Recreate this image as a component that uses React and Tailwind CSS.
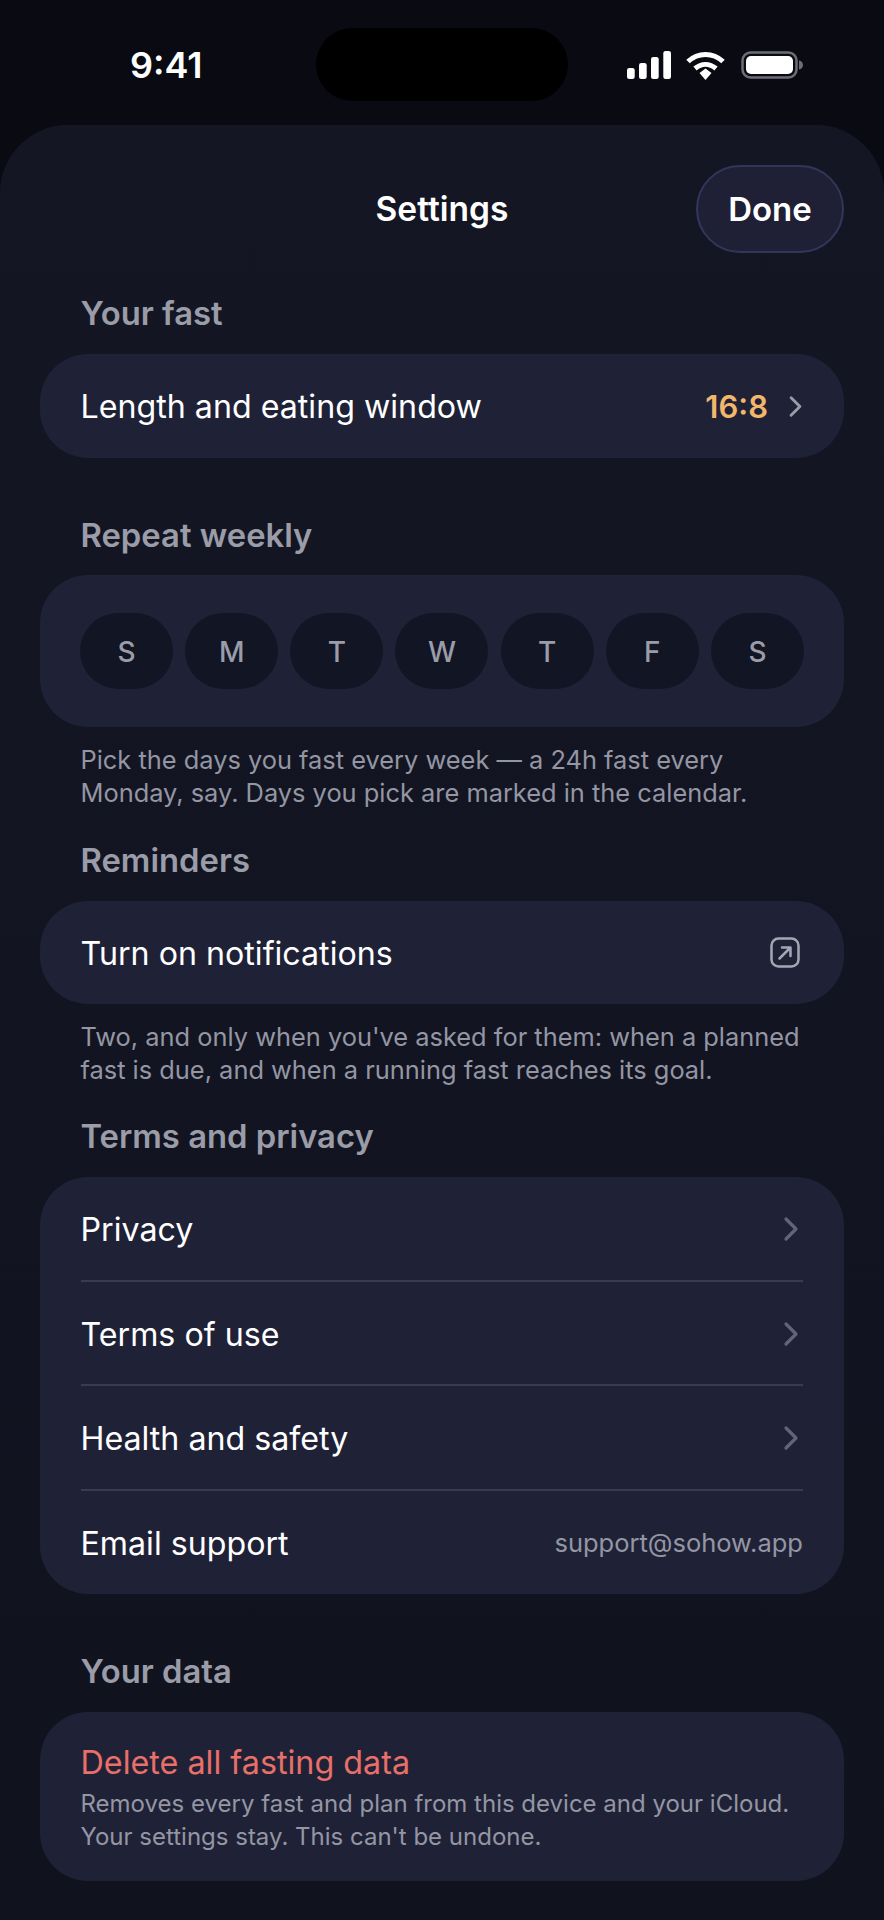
const DAYS = ["S", "M", "T", "W", "T", "F", "S"];
const LINKS = ["Privacy", "Terms of use", "Health and safety"];

const Chevron = ({ className }) => (
  <svg viewBox="0 0 16 26" fill="none" className={className}>
    <path d="M3 3l10 10-10 10" stroke="currentColor" strokeWidth="3.2" strokeLinecap="round" strokeLinejoin="round" />
  </svg>
);

const StatusBar = () => (
  <div className="relative h-[125px] flex justify-between pt-[44px] pl-[130px] pr-[81px] text-white">
    <div className="text-[36px] leading-[42px] font-semibold">9:41</div>
    <div className="absolute left-[316px] top-[28px] w-[252px] h-[73px] rounded-[37px] bg-black" />
    <div className="flex items-center h-[42px]">
      <svg width="44" height="28" viewBox="0 0 44 28" fill="white">
        <rect x="0" y="17" width="7.700" height="11" rx="2.300" />
        <rect x="12" y="12" width="7.700" height="16" rx="2.300" />
        <rect x="24" y="6" width="7.700" height="22" rx="2.300" />
        <rect x="36.300" y="0" width="7.700" height="28" rx="2.300" />
      </svg>
      <svg width="39" height="29" viewBox="0 0 39 29" fill="none" stroke="white" strokeWidth="5" className="ml-[15px]">
        <path d="M2 10.500c10-9.500 25-9.500 35 0" />
        <path d="M9 17.500c6.500-5.500 14.500-5.500 21 0" />
        <path d="M13.500 22l6-4.500 6 4.500-6 7z" fill="white" stroke="none" />
      </svg>
      <svg width="62" height="28" viewBox="0 0 62 28" className="ml-[16px]">
        <rect x="1.500" y="1.500" width="54" height="25" rx="8" fill="none" stroke="#6d6e75" strokeWidth="2.500" />
        <rect x="5" y="5" width="47" height="18" rx="5" fill="white" />
        <path d="M58 9.500c2.500 0.500 4 2.200 4 4.500s-1.500 4-4 4.500z" fill="#6d6e75" />
      </svg>
    </div>
  </div>
);

const Heading = ({ children, className }) => (
  <div className={`pl-[40.500px] h-[40px] text-[32.800px] leading-[40px] font-semibold text-[#9a9ca8] ${className}`}>{children}</div>
);

const Note = ({ children, className }) => (
  <div className={`pl-[40.500px] whitespace-nowrap text-[25.400px] leading-[33px] text-[#9496a3] ${className}`}>{children}</div>
);

export default function App() {
  return (
    <div
      className="w-[884px] h-[1920px] overflow-hidden bg-[#090a12] text-white"
      style={{ fontFamily: "Inter, sans-serif" }}
    >
      <StatusBar />
      <div className="h-[1795px] rounded-t-[68px] bg-gradient-to-b from-[#141624] to-[#10121e] px-[40px]">
        <div className="relative h-[168px]">
          <div className="absolute left-0 right-0 top-[64px] text-center text-[33.500px] leading-[40px] font-semibold">Settings</div>
          <div className="absolute right-0 top-[40px] w-[148px] h-[88px] pt-[2px] flex items-center justify-center rounded-[44px] bg-[#1f2035] border-2 border-[#33365c] text-[33px] font-semibold">
            Done
          </div>
        </div>

        <Heading>Your fast</Heading>
        <div className="mt-[21px] h-[104px] flex items-center pl-[40.500px] pr-[41px] rounded-[48px] bg-[#1f2237]">
          <span className="pt-[2px] text-[32.200px] flex-1">Length and eating window</span>
          <span className="pt-[2px] text-[31px] font-semibold text-[#f3b76b]">16:8</span>
          <Chevron className="w-[15px] h-[23px] ml-[20px] text-[#9a9ca8]" />
        </div>

        <Heading className="mt-[57px]">Repeat weekly</Heading>
        <div className="mt-[20px] h-[152px] flex items-center justify-between px-[40px] rounded-[48px] bg-[#1f2237]">
          {DAYS.map((d, i) => (
            <div key={i} className="w-[93px] h-[76px] pt-[2px] flex items-center justify-center rounded-full bg-[#121524] text-[28px] font-medium text-[#9a9ca8]">
              {d}
            </div>
          ))}
        </div>
        <Note className="mt-[16px]">
          Pick the days you fast every week — a 24h fast every
          <br />
          Monday, say. Days you pick are marked in the calendar.
        </Note>

        <Heading className="mt-[31px]">Reminders</Heading>
        <div className="mt-[21px] h-[103px] flex items-center justify-between pl-[40.500px] pr-[44px] rounded-[48px] bg-[#1f2237]">
          <span className="pt-[3px] text-[32.200px]">Turn on notifications</span>
          <svg width="30" height="31" viewBox="0 0 30 31" fill="none" stroke="#a4a6b2" strokeWidth="2.500" strokeLinecap="round" strokeLinejoin="round">
            <rect x="1.500" y="1.500" width="27" height="28" rx="7" />
            <path d="M9.500 21.500L20 11M12 10.500h8.500V19" />
          </svg>
        </div>
        <Note className="mt-[16px]">
          Two, and only when you've asked for them: when a planned
          <br />
          fast is due, and when a running fast reaches its goal.
        </Note>

        <Heading className="mt-[30px]">Terms and privacy</Heading>
        <div className="mt-[21px] rounded-[48px] bg-[#1f2237] pl-[40.500px] pr-[41px]">
          {LINKS.map((l) => (
            <div key={l} className="h-[104.500px] flex items-center justify-between border-b-2 border-[#3a3c4e] text-[32.200px]">
              <span className="pt-[4px]">{l}</span>
              <Chevron className="w-[16px] h-[26px] mt-[2px] mr-[4px] text-[#62647a]" />
            </div>
          ))}
          <div className="h-[103px] flex items-center justify-between text-[32.200px]">
            <span className="pt-[4px]">Email support</span>
            <span className="pt-[2px] text-[25.500px] text-[#9496a3]">support@sohow.app</span>
          </div>
        </div>

        <Heading className="mt-[57px]">Your data</Heading>
        <div className="mt-[21px] h-[169px] rounded-[48px] bg-[#1f2237] pl-[40.500px] pr-[41px] pt-[31px] whitespace-nowrap">
          <div className="text-[32.300px] leading-[40px] text-[#e96f69]">Delete all fasting data</div>
          <div className="mt-[4px] text-[24px] leading-[33px] text-[#9496a3]">
            Removes every fast and plan from this device and your iCloud.
            <br />
            Your settings stay. This can't be undone.
          </div>
        </div>
      </div>
    </div>
  );
}
